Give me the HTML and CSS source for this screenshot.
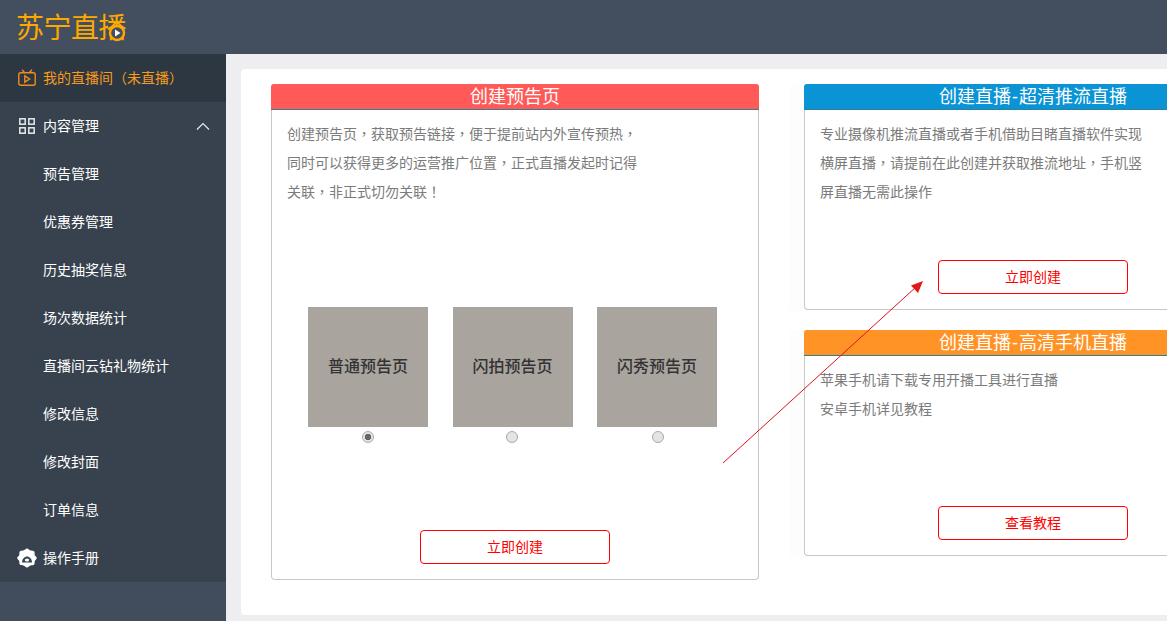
FILE: index.html
```html
<!DOCTYPE html>
<html lang="zh-CN">
<head>
<meta charset="utf-8">
<title>苏宁直播</title>
<link rel="stylesheet" href="styles.css">
</head>
<body>
<header class="topbar">
  <div class="logo">苏宁直播
    <svg class="logo-play" viewBox="0 0 18 18" width="18" height="18"><circle cx="9" cy="9" r="7" fill="#434f5e" stroke="#ffa800" stroke-width="2.4"/><path d="M7 5.500 L12.500 9 L7 12.500 Z" fill="#fff"/></svg>
  </div>
</header>
<div class="layout">
  <nav class="sidebar">
    <ul class="menu">
      <li class="item active">
        <svg class="icon" viewBox="0 0 18 18" width="18" height="18" fill="none" stroke="#f08c1e" stroke-width="1.4"><rect x="0.8" y="3.7" width="16.4" height="12.6" rx="1.8"/><path d="M4 0.8 L6.5 3.500 M14 0.8 L11.5 3.500"/><path d="M6.8 6.8 L11.6 10 L6.8 13.2 Z"/></svg>
        <span>我的直播间<span class="p">（</span>未直播<span class="p">）</span></span>
      </li>
      <li class="item">
        <svg class="icon" viewBox="0 0 18 18" width="18" height="18" fill="none" stroke="#e6eaea" stroke-width="1.5"><rect x="1.8" y="1.8" width="5.4" height="5.4"/><rect x="10.8" y="1.8" width="5.4" height="5.4"/><rect x="1.8" y="10.8" width="5.4" height="5.4"/><rect x="10.8" y="10.8" width="5.4" height="5.4"/></svg>
        <span>内容管理</span>
        <svg class="chevron" viewBox="0 0 14 8" width="14" height="8" fill="none" stroke="#e6eaea" stroke-width="1.2"><path d="M1 7.500 L7 1.500 L13 7.500"/></svg>
      </li>
      <li class="item sub">预告管理</li>
      <li class="item sub">优惠券管理</li>
      <li class="item sub">历史抽奖信息</li>
      <li class="item sub">场次数据统计</li>
      <li class="item sub">直播间云钻礼物统计</li>
      <li class="item sub">修改信息</li>
      <li class="item sub">修改封面</li>
      <li class="item sub">订单信息</li>
      <li class="item">
        <svg class="icon icon-manual" viewBox="0 0 20 20" width="20" height="20"><path d="M10 0.500 C11.500 0.500 12.200 2.200 13.500 2.500 C15 2.800 16.500 2.300 17.300 3.500 C18 4.800 17.300 6 17.800 7.200 C18.300 8.300 19.800 8.800 19.800 10 C19.800 11.200 18.300 11.800 17.800 13 C17.300 14.200 18 15.500 17.200 16.600 C16.300 17.800 15 17.200 13.500 17.600 C12.200 18 11.500 19.500 10 19.500 C8.500 19.500 7.800 18 6.500 17.600 C5 17.200 3.700 17.800 2.800 16.600 C2 15.500 2.700 14.200 2.200 13 C1.700 11.800 0.200 11.200 0.200 10 C0.200 8.800 1.700 8.300 2.200 7.200 C2.700 6 2 4.800 2.700 3.500 C3.500 2.300 5 2.800 6.500 2.500 C7.800 2.200 8.500 0.500 10 0.500 Z" fill="#fff"/><path d="M5 14.500 C5 11 7.500 8.500 10 8.500 C12.500 8.500 15 11 15 14.500 Z" fill="#37424e"/><ellipse cx="10" cy="12" rx="2.200" ry="1.500" fill="#fff"/></svg>
        <span>操作手册</span>
      </li>
    </ul>
  </nav>
  <main class="content">
    <section class="panel">
      <article class="card card-main">
        <h2 class="card-title red">创建预告页</h2>
        <div class="card-body">
          <p class="desc">创建预告页<span class="p">，</span>获取预告链接<span class="p">，</span>便于提前站内外宣传预热<span class="p">，</span><br>同时可以获得更多的运营推广位置<span class="p">，</span>正式直播发起时记得<br>关联<span class="p">，</span>非正式切勿关联<span class="p">！</span></p>
          <div class="options">
            <label class="option">
              <span class="tile">普通预告页</span>
              <input class="radio" type="radio" name="kind" checked>
            </label>
            <label class="option">
              <span class="tile">闪拍预告页</span>
              <input class="radio radio-left" type="radio" name="kind">
            </label>
            <label class="option">
              <span class="tile">闪秀预告页</span>
              <input class="radio radio-right" type="radio" name="kind">
            </label>
          </div>
          <a class="btn btn-main">立即创建</a>
        </div>
      </article>
      <div class="side">
        <div class="card-wrap">
          <article class="card card-side">
            <h2 class="card-title blue">创建直播<span class="dash">-</span>超清推流直播</h2>
            <div class="card-body">
              <p class="desc">专业摄像机推流直播或者手机借助目睹直播软件实现<br>横屏直播<span class="p">，</span>请提前在此创建并获取推流地址<span class="p">，</span>手机竖<br>屏直播无需此操作</p>
              <a class="btn">立即创建</a>
            </div>
          </article>
        </div>
        <div class="card-wrap">
          <article class="card card-side">
            <h2 class="card-title orange">创建直播<span class="dash">-</span>高清手机直播</h2>
            <div class="card-body">
              <p class="desc">苹果手机请下载专用开播工具进行直播<br>安卓手机详见教程</p>
              <a class="btn">查看教程</a>
            </div>
          </article>
        </div>
      </div>
    </section>
  </main>
</div>
<svg class="arrow" width="1167" height="621" viewBox="0 0 1167 621">
  <path d="M723 463 L916 287" fill="none" stroke="#e0101e" stroke-width="1"/>
  <path d="M923 281 L911 285.500 L918 293 Z" fill="#e01a1a"/>
</svg>
</body>
</html>
```
FILE: styles.css
```css
* { box-sizing: border-box; }
html, body {
  margin: 0;
  height: 621px;
  overflow: hidden;
}
body {
  position: relative;
  font-family: "Liberation Sans", "Noto Sans CJK SC", sans-serif;
  font-size: 14px;
  background: #eeeef0;
  display: flex;
  flex-direction: column;
}
.p {
  font-family: "Noto Sans CJK TC", sans-serif;
  font-feature-settings: "locl" 0;
  line-height: 0;
}
.dash { margin: 0 1px; }
.topbar {
  height: 54px;
  flex: none;
  background: #434f5e;
  padding-left: 16px;
}
.logo {
  position: relative;
  width: max-content;
  font-family: "Noto Sans CJK SC", sans-serif;
  font-size: 28px;
  font-weight: 400;
  letter-spacing: -0.5px;
  line-height: 53px;
  color: #ffa800;
}
.logo-play {
  position: absolute;
  left: 92px;
  top: 24px;
}
.layout {
  flex: 1;
  display: flex;
  min-height: 0;
}
.sidebar {
  width: 226px;
  flex: none;
  background: #414d5c;
}
.menu {
  list-style: none;
  margin: 0;
  padding: 0;
  background: #37424e;
}
.item {
  height: 48px;
  display: flex;
  align-items: center;
  padding-left: 18px;
  color: #fff;
  line-height: 48px;
}
.item .icon { margin-right: 7px; flex: none; }
.item .icon-manual { margin-left: -1px; margin-right: 6px; }
.item.active {
  background: #2c3742;
  color: #f79a1c;
}
.item.sub { padding-left: 43px; }
.chevron {
  margin-left: auto;
  margin-right: 16px;
}
.content {
  flex: 1;
  min-width: 0;
  padding: 15px 0 6px 15px;
}
.panel {
  height: 100%;
  background: #fff;
  border-radius: 4px 0 0 4px;
  padding: 15px 0 0 30px;
  display: flex;
  align-items: flex-start;
  overflow: hidden;
}
.card {
  background: #fff;
  border: 1px solid #c8c8c8;
  border-top: 0;
  border-radius: 4px;
  display: flex;
  flex-direction: column;
}
.card-main {
  width: 488px;
  height: 496px;
  flex: none;
}
.side {
  margin-left: 30px;
  flex: none;
  width: 473px;
  display: flex;
  flex-direction: column;
  gap: 19px;
}
.card-wrap {
  background: #fdfdfd;
  border-radius: 4px;
  padding: 0 0 1px 15px;
}
.card-side { height: 226px; }
.card-title {
  margin: 0 -1px;
  height: 26px;
  border-radius: 3px 3px 0 0;
  border-bottom: 1px solid #2f7f95;
  color: #fff;
  font-size: 18px;
  font-weight: 400;
  line-height: 27px;
  text-align: center;
}
.red { background: #ff5a57; }
.blue { background: #0a94d6; }
.orange { background: #ff9326; }
.card-body {
  flex: 1;
  display: flex;
  flex-direction: column;
  padding: 10px 15px 15px;
}
.desc {
  margin: 0;
  color: #7b7b7b;
  line-height: 29px;
}
.options {
  display: flex;
  gap: 24.5px;
  margin: 100px 0 0 21px;
}
.option {
  display: flex;
  flex-direction: column;
  align-items: center;
}
.tile {
  width: 120px;
  height: 120px;
  background: #aaa49f;
  color: #333;
  font-size: 16px;
  line-height: 120px;
  text-align: center;
  font-weight: 500;
}
.radio {
  appearance: none;
  width: 12px;
  height: 12px;
  margin: 4px 0 0;
  border: 1px solid #aaa;
  border-radius: 50%;
  background: #e4e4e0;
}
.radio:checked {
  background: radial-gradient(circle, #666 0 3px, #e4e4e0 3.5px);
}
.radio-left { margin-left: -2px; }
.radio-right { margin-left: 2px; }
.btn {
  display: block;
  width: 190px;
  height: 34px;
  margin: auto 0 0 118px;
  border: 1px solid #f00;
  border-radius: 4px;
  color: #f00;
  line-height: 33px;
  text-align: center;
}
.btn-main { margin-left: 133px; }
.arrow {
  position: absolute;
  left: 0;
  top: 0;
  pointer-events: none;
}
```
